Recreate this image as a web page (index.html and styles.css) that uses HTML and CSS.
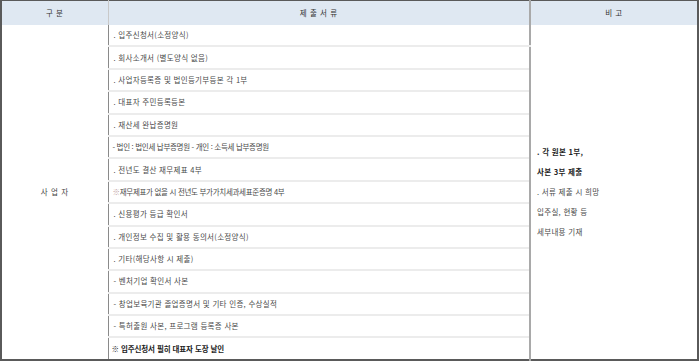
FILE: index.html
```html
<!DOCTYPE html>
<html lang="ko">
<head>
<meta charset="utf-8">
<link rel="stylesheet" href="styles.css">
</head>
<body>
<table class="docs">
  <colgroup>
    <col class="c1">
    <col class="c2">
    <col class="c3">
  </colgroup>
  <thead>
    <tr>
      <th>구 분</th>
      <th>제 출 서 류</th>
      <th>비 고</th>
    </tr>
  </thead>
  <tbody>
    <tr>
      <td class="cat" rowspan="15">사 업 자</td>
      <td class="item">. 입주신청서(소정양식)</td>
      <td class="note" rowspan="15">
        <p class="b">. 각 원본 1부,</p>
        <p class="b">사본 3부 제출</p>
        <p>. 서류 제출 시 희망</p>
        <p>입주실, 현황 등</p>
        <p>세부내용 기재</p>
      </td>
    </tr>
    <tr><td class="item">. 회사소개서 (별도양식 없음)</td></tr>
    <tr><td class="item">. 사업자등록증 및 법인등기부등본 각 1부</td></tr>
    <tr><td class="item">. 대표자 주민등록등본</td></tr>
    <tr><td class="item">. 재산세 완납증명원</td></tr>
    <tr><td class="item tight">- 법인 : 법인세 납부증명원 - 개인 : 소득세 납부증명원</td></tr>
    <tr><td class="item">. 전년도 결산 재무제표 4부</td></tr>
    <tr><td class="item tight"><span class="mark">※</span>재무제표가 없을 시 전년도 부가가치세과세표준증명 4부</td></tr>
    <tr><td class="item">. 신용평가 등급 확인서</td></tr>
    <tr><td class="item">. 개인정보 수집 및 활용 동의서(소정양식)</td></tr>
    <tr><td class="item">. 기타(해당사항 시 제출)</td></tr>
    <tr><td class="item">- 벤처기업 확인서 사본</td></tr>
    <tr><td class="item">- 창업보육기관 졸업증명서 및 기타 인증, 수상실적</td></tr>
    <tr><td class="item">- 특허출원 사본, 프로그램 등록증 사본</td></tr>
    <tr><td class="item last b">※ 입주신청서 필히 대표자 도장 날인</td></tr>
  </tbody>
</table>
</body>
</html>
```
FILE: styles.css
```css
html, body {
  margin: 0;
  padding: 0;
  background: #fff;
}
body {
  font-family: "Noto Sans CJK KR", "Noto Sans", sans-serif;
  font-size: 7.5px;
  color: #4a4a4a;
}
.docs {
  width: 699px;
  border-collapse: collapse;
  table-layout: fixed;
  border: 2px solid #5a5a5a;
  border-top-width: 1px;
}
.c1 { width: 107px; }
.c2 { width: 422px; }
.c3 { width: auto; }
.docs th {
  height: 24px;
  background: #dfe8f2;
  font-weight: normal;
  color: #333;
  text-align: center;
  padding: 0;
  letter-spacing: 0.6px;
  line-height: 10px;
}
.docs th:nth-child(1) { border-right: 1px solid #c9c9c9; }
.docs th:nth-child(2) { border-right: 2px solid #a9a9a9; }
.docs td {
  padding: 0;
  line-height: 10px;
}
.cat {
  text-align: center;
  vertical-align: middle;
  border-right: 1px solid #8a8a8a;
  color: #444;
  letter-spacing: 0.6px;
}
.item {
  height: 20.4px;
  padding: 0 0 0 5px !important;
  border-bottom: 2px solid #ececec;
  letter-spacing: 0.3px;
  white-space: nowrap;
}
.item.tight {
  letter-spacing: -0.3px;
  padding-left: 4px !important;
}
.item.last {
  border-bottom: none;
  letter-spacing: -0.1px;
  padding-left: 3px !important;
}
.note {
  vertical-align: middle;
  border-left: 2px solid #a9a9a9;
  padding: 0 0 0 6px !important;
  letter-spacing: 0.3px;
}
.note p {
  margin: 0;
  line-height: 20px;
}
.b {
  font-weight: bold;
  color: #222;
}
.mark {
  color: #c0a0a0;
}
```
